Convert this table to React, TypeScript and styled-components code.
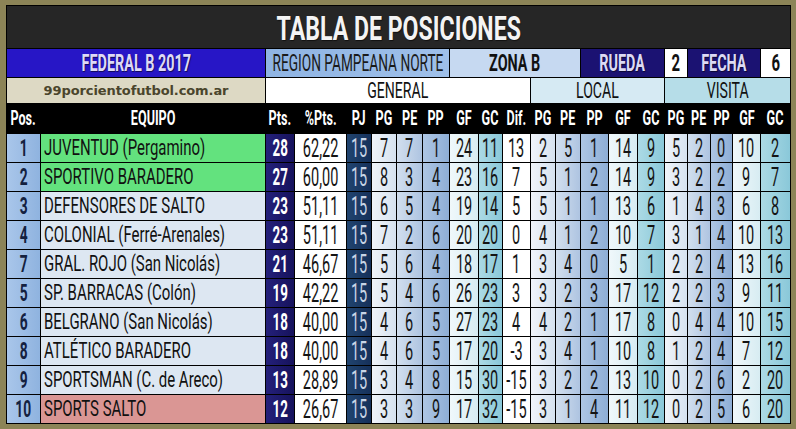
import React from "react";
import styled, { createGlobalStyle } from "styled-components";

const GlobalStyle = createGlobalStyle`
  html, body { margin: 0; padding: 0; background: #8c8457; }
  * { box-sizing: border-box; }
`;

const COLS = [33, 224, 28, 51, 24, 24, 25, 26, 28, 23, 27, 24, 24, 27, 28, 26, 22, 22, 21, 27, 29];

const Frame = styled.div`
  width: 796px;
  height: 429px;
  padding: 5px 5px 5px 6px;
  background: #8c8457;
`;

const Board = styled.div`
  display: grid;
  grid-template-columns: ${COLS.map((c) => c + "px").join(" ")};
  grid-template-rows: 42px 28px 25px 29px repeat(10, 28px);
  gap: 1px;
  background: #000;
  border: 1px solid #000;
  width: 785px;
  height: 419px;
  font-family: Roboto, "Liberation Sans", sans-serif;
`;

const Cell = styled.div<{ $bg?: string; $color?: string; $span?: number; $left?: boolean }>`
  grid-column: span ${(p) => p.$span ?? 1};
  background: ${(p) => p.$bg ?? "#fff"};
  color: ${(p) => p.$color ?? "#141414"};
  display: flex;
  align-items: center;
  justify-content: ${(p) => (p.$left ? "flex-start" : "center")};
  padding-left: ${(p) => (p.$left ? "3px" : "0")};
  overflow: visible;
  white-space: nowrap;
  min-width: 0;
`;

const TitleCell = styled(Cell)`
  grid-column: 1 / -1;
  background: #262626;
  color: #f4f4f4;
  padding-top: 1px;
`;

const Sq = styled.span<{ $size: number; $scale: number; $bold?: boolean; $left?: boolean; $shadow?: boolean }>`
  display: inline-block;
  font-size: ${(p) => p.$size}px;
  font-weight: ${(p) => (p.$bold ? 700 : 400)};
  line-height: 1;
  transform: scaleX(${(p) => p.$scale});
  transform-origin: ${(p) => (p.$left ? "left center" : "center")};
  text-shadow: ${(p) => (p.$shadow ? "1px 1px 1px rgba(0,0,0,0.55)" : "none")};
  flex-shrink: 0;
`;

const SiteText = styled.span`
  font-family: "DejaVu Sans", Verdana, sans-serif;
  font-weight: 700;
  font-size: 13px;
  color: #4a452c;
  letter-spacing: -0.1px;
`;

const FILL = {
  pos: "linear-gradient(90deg, #a9c6ea 0%, #8fb3df 100%)",
  green: "#63e27e",
  light: "#dde7f2",
  red: "#da9694",
  pts: "linear-gradient(90deg, #24207a 0%, #16125c 100%)",
  pj: "linear-gradient(90deg, #21446f 0%, #15305a 100%)",
  pg: "linear-gradient(90deg, #f0f4fa 0%, #d6e2ef 100%)",
  pe: "linear-gradient(90deg, #d2dfee 0%, #aec4e1 100%)",
  pp: "linear-gradient(90deg, #aec6e4 0%, #8eaed6 100%)",
  gf: "linear-gradient(90deg, #f0f8fb 0%, #d7ecf2 100%)",
  gc: "linear-gradient(90deg, #acdae5 0%, #8ac8d9 100%)",
  white: "#ffffff",
};

const ROWS: { pos: string; team: string; bg: string; vals: (string | number)[] }[] = [
  { pos: "1", team: "JUVENTUD (Pergamino)", bg: FILL.green, vals: [28, "62,22", 15, 7, 7, 1, 24, 11, 13, 2, 5, 1, 14, 9, 5, 2, 0, 10, 2] },
  { pos: "2", team: "SPORTIVO BARADERO", bg: FILL.green, vals: [27, "60,00", 15, 8, 3, 4, 23, 16, 7, 5, 1, 2, 14, 9, 3, 2, 2, 9, 7] },
  { pos: "3", team: "DEFENSORES DE SALTO", bg: FILL.light, vals: [23, "51,11", 15, 6, 5, 4, 19, 14, 5, 5, 1, 1, 13, 6, 1, 4, 3, 6, 8] },
  { pos: "4", team: "COLONIAL (Ferré-Arenales)", bg: FILL.light, vals: [23, "51,11", 15, 7, 2, 6, 20, 20, 0, 4, 1, 2, 10, 7, 3, 1, 4, 10, 13] },
  { pos: "7", team: "GRAL. ROJO (San Nicolás)", bg: FILL.light, vals: [21, "46,67", 15, 5, 6, 4, 18, 17, 1, 3, 4, 0, 5, 1, 2, 2, 4, 13, 16] },
  { pos: "5", team: "SP. BARRACAS (Colón)", bg: FILL.light, vals: [19, "42,22", 15, 5, 4, 6, 26, 23, 3, 3, 2, 3, 17, 12, 2, 2, 3, 9, 11] },
  { pos: "6", team: "BELGRANO (San Nicolás)", bg: FILL.light, vals: [18, "40,00", 15, 4, 6, 5, 27, 23, 4, 4, 2, 1, 17, 8, 0, 4, 4, 10, 15] },
  { pos: "8", team: "ATLÉTICO BARADERO", bg: FILL.light, vals: [18, "40,00", 15, 4, 6, 5, 17, 20, -3, 3, 4, 1, 10, 8, 1, 2, 4, 7, 12] },
  { pos: "9", team: "SPORTSMAN (C. de Areco)", bg: FILL.light, vals: [13, "28,89", 15, 3, 4, 8, 15, 30, -15, 3, 2, 2, 13, 10, 0, 2, 6, 2, 20] },
  { pos: "10", team: "SPORTS SALTO", bg: FILL.red, vals: [12, "26,67", 15, 3, 3, 9, 17, 32, -15, 3, 1, 4, 11, 12, 0, 2, 5, 6, 20] },
];

const VAL_FILLS = [
  FILL.pts, FILL.white, FILL.pj, FILL.pg, FILL.pe, FILL.pp, FILL.gf, FILL.gc, FILL.white,
  FILL.pg, FILL.pe, FILL.pp, FILL.gf, FILL.gc,
  FILL.pg, FILL.pe, FILL.pp, FILL.gf, FILL.gc,
];

const HEADERS = ["Pos.", "EQUIPO", "Pts.", "%Pts.", "PJ", "PG", "PE", "PP", "GF", "GC", "Dif.", "PG", "PE", "PP", "GF", "GC", "PG", "PE", "PP", "GF", "GC"];

export default function App() {
  return (
    <>
      <GlobalStyle />
      <Frame>
        <Board>
          <TitleCell>
            <Sq $size={34} $scale={0.68} $bold $shadow>TABLA DE POSICIONES</Sq>
          </TitleCell>

          <Cell $span={2} $bg="#2716c6" $color="#dedaf6">
            <Sq $size={24} $scale={0.6} $bold $shadow>FEDERAL B 2017</Sq>
          </Cell>
          <Cell $span={6} $bg="linear-gradient(90deg, #8fb4e3 0%, #9fc0e9 100%)" $color="#1a1a1a">
            <Sq $size={24} $scale={0.57}>REGION PAMPEANA NORTE</Sq>
          </Cell>
          <Cell $span={5} $bg="#c6d9f1" $color="#111">
            <Sq $size={24} $scale={0.6} $bold>ZONA B</Sq>
          </Cell>
          <Cell $span={3} $bg="#1b1272" $color="#dcdaf4">
            <Sq $size={24} $scale={0.6} $bold $shadow>RUEDA</Sq>
          </Cell>
          <Cell $bg="#fff" $color="#111">
            <Sq $size={24} $scale={0.62} $bold>2</Sq>
          </Cell>
          <Cell $span={3} $bg="#1b1272" $color="#dcdaf4">
            <Sq $size={24} $scale={0.6} $bold $shadow>FECHA</Sq>
          </Cell>
          <Cell $bg="#fff" $color="#111">
            <Sq $size={24} $scale={0.62} $bold>6</Sq>
          </Cell>

          <Cell $span={2} $bg="#ddd9c4">
            <SiteText>99porcientofutbol.com.ar</SiteText>
          </Cell>
          <Cell $span={9} $bg="#fff" $color="#111">
            <Sq $size={22} $scale={0.64}>GENERAL</Sq>
          </Cell>
          <Cell $span={5} $bg="#d6eaf3" $color="#111">
            <Sq $size={22} $scale={0.64}>LOCAL</Sq>
          </Cell>
          <Cell $span={5} $bg="#b6dde8" $color="#111">
            <Sq $size={22} $scale={0.64}>VISITA</Sq>
          </Cell>

          {HEADERS.map((h, i) => (
            <Cell key={"h" + i} $bg="#000" $color="#fff">
              <Sq $size={21} $scale={0.6} $bold>{h}</Sq>
            </Cell>
          ))}

          {ROWS.map((r, ri) => (
            <React.Fragment key={"r" + ri}>
              <Cell $bg={FILL.pos} $color="#14213f">
                <Sq $size={23} $scale={0.6} $bold>{r.pos}</Sq>
              </Cell>
              <Cell $bg={r.bg} $color="#111" $left>
                <Sq $size={22} $scale={0.68} $left>{r.team}</Sq>
              </Cell>
              {r.vals.map((v, vi) => (
                <Cell
                  key={vi}
                  $bg={VAL_FILLS[vi]}
                  $color={vi === 0 ? "#ffffff" : vi === 2 ? "#c9d5e6" : "#141414"}
                >
                  <Sq $size={vi === 0 ? 23 : 25} $scale={0.58} $bold={vi === 0}>{v}</Sq>
                </Cell>
              ))}
            </React.Fragment>
          ))}
        </Board>
      </Frame>
    </>
  );
}
